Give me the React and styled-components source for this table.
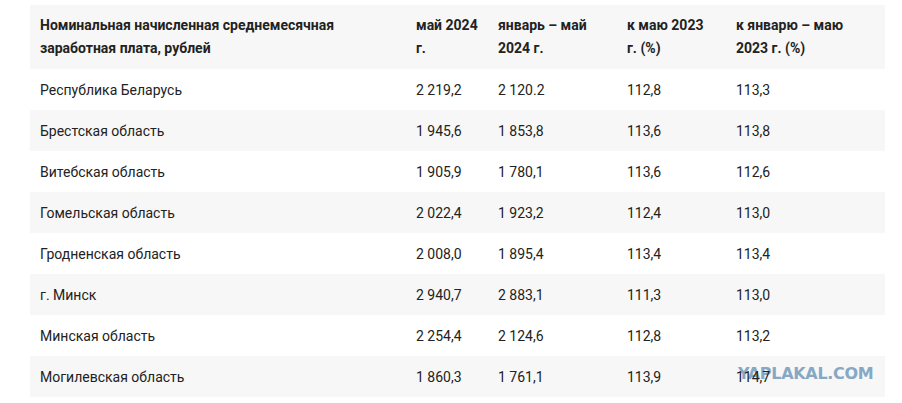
import React from 'react';
import styled, { createGlobalStyle } from 'styled-components';

const GlobalStyle = createGlobalStyle`
  body {
    margin: 0;
    background: #fff;
    font-family: Roboto, 'Liberation Sans', Arial, sans-serif;
  }
`;

const Page = styled.div`
  position: relative;
  width: 902px;
  height: 403px;
  padding: 5px 0 0 30px;
  box-sizing: border-box;
  overflow: hidden;
`;

const Table = styled.table`
  width: 855px;
  border-collapse: collapse;
  table-layout: fixed;
  font-size: 14px;
  color: #222;
`;

const Row = styled.tr`
  background: ${(p) => (p.$shaded ? '#f7f7f7' : '#fff')};
  height: ${(p) => (p.$head ? '64px' : '41px')};
`;

const HeadCell = styled.th`
  text-align: left;
  vertical-align: middle;
  font-weight: 700;
  line-height: 23px;
  padding: 0 10px;
`;

const Cell = styled.td`
  vertical-align: middle;
  padding: 0 10px;
  line-height: 20px;
  position: relative;
  z-index: 1;
`;

const Watermark = styled.div`
  position: absolute;
  left: 738px;
  top: 364px;
  font-family: 'DejaVu Sans', Verdana, sans-serif;
  font-weight: 700;
  font-size: 16px;
  letter-spacing: -0.3px;
  color: #86a8c4;
  z-index: 0;
`;

const cols = [376, 82, 129, 109, 159];

const rows = [
  ['Республика Беларусь', '2 219,2', '2 120.2', '112,8', '113,3'],
  ['Брестская область', '1 945,6', '1 853,8', '113,6', '113,8'],
  ['Витебская область', '1 905,9', '1 780,1', '113,6', '112,6'],
  ['Гомельская область', '2 022,4', '1 923,2', '112,4', '113,0'],
  ['Гродненская область', '2 008,0', '1 895,4', '113,4', '113,4'],
  ['г. Минск', '2 940,7', '2 883,1', '111,3', '113,0'],
  ['Минская область', '2 254,4', '2 124,6', '112,8', '113,2'],
  ['Могилевская область', '1 860,3', '1 761,1', '113,9', '114,7'],
];

const App = () => {
  return (
    <Page>
      <GlobalStyle />
      <Table>
        <colgroup>
          {cols.map((w, i) => (
            <col key={i} style={{ width: w }} />
          ))}
        </colgroup>
        <thead>
          <Row $shaded $head>
            <HeadCell>Номинальная начисленная среднемесячная заработная плата, рублей</HeadCell>
            <HeadCell>май 2024 г.</HeadCell>
            <HeadCell>январь – май 2024 г.</HeadCell>
            <HeadCell>к маю 2023 г. (%)</HeadCell>
            <HeadCell>к январю – маю 2023 г. (%)</HeadCell>
          </Row>
        </thead>
        <tbody>
          {rows.map((r, i) => (
            <Row key={i} $shaded={i % 2 === 1}>
              {r.map((c, j) => (
                <Cell key={j}>{c}</Cell>
              ))}
            </Row>
          ))}
        </tbody>
      </Table>
      <Watermark>YAPLAKAL.COM</Watermark>
    </Page>
  );
};

export default App;
